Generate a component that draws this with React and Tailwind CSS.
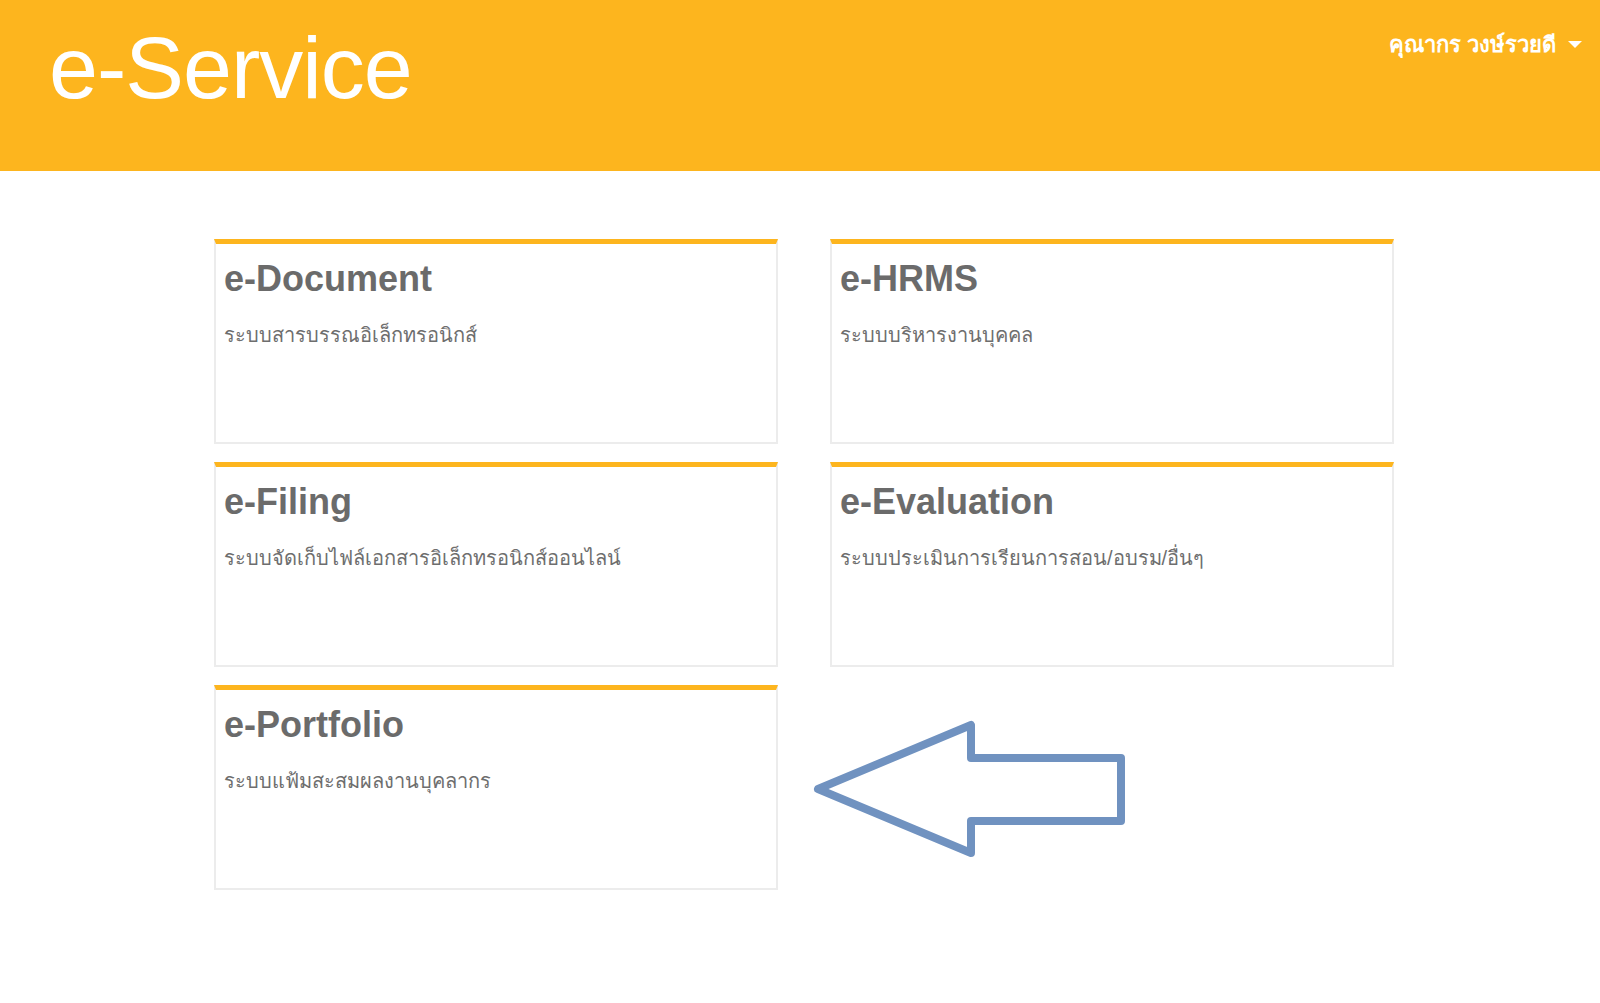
import React from "react";

const services = [
  { name: "e-Document", desc: "ระบบสารบรรณอิเล็กทรอนิกส์" },
  { name: "e-HRMS", desc: "ระบบบริหารงานบุคคล" },
  { name: "e-Filing", desc: "ระบบจัดเก็บไฟล์เอกสารอิเล็กทรอนิกส์ออนไลน์" },
  { name: "e-Evaluation", desc: "ระบบประเมินการเรียนการสอน/อบรม/อื่นๆ" },
  { name: "e-Portfolio", desc: "ระบบแฟ้มสะสมผลงานบุคลากร" },
];

const ServiceCard = ({ name, desc }) => (
  <div className="h-[205px] border-2 border-t-[5px] border-[#ececec] border-t-[#fdb51e] px-[8px] pt-[14px]">
    <h2 className="text-[36px] font-bold leading-[42px] text-[#6b6b6b]">{name}</h2>
    <p className="mt-[21px] text-[20px] leading-[28px] text-[#6e6e6e]">{desc}</p>
  </div>
);

// annotation arrow drawn over the page
const Arrow = () => (
  <svg className="absolute left-[805px] top-[712px]" width="330" height="155" viewBox="805 712 330 155">
    <polygon
      points="818,789 971,725 971,758 1121,758 1121,821 971,821 971,853"
      fill="none"
      stroke="#7092c0"
      strokeWidth="8"
      strokeLinejoin="round"
    />
  </svg>
);

export default function App() {
  return (
    <div className="relative min-h-[1003px] bg-white font-['Liberation_Sans',Arial,sans-serif]">
      <header className="flex h-[171px] items-start justify-between bg-[#fdb51e] pl-[49px] pr-[18px]">
        <h1 className="mt-[17px] text-[88px] leading-[102px] tracking-[-1px] text-white">e-Service</h1>
        <button className="mt-[28px] flex items-center gap-[12px] text-[22px] font-bold text-white">
          คุณากร วงษ์รวยดี
          <span className="h-0 w-0 border-x-[7px] border-t-[7px] border-x-transparent border-t-white" />
        </button>
      </header>

      <main className="ml-[214px] grid w-[1180px] grid-cols-2 gap-x-[52px] gap-y-[18px] pt-[68px]">
        {services.map((s) => (
          <ServiceCard key={s.name} {...s} />
        ))}
      </main>

      <Arrow />
    </div>
  );
}
